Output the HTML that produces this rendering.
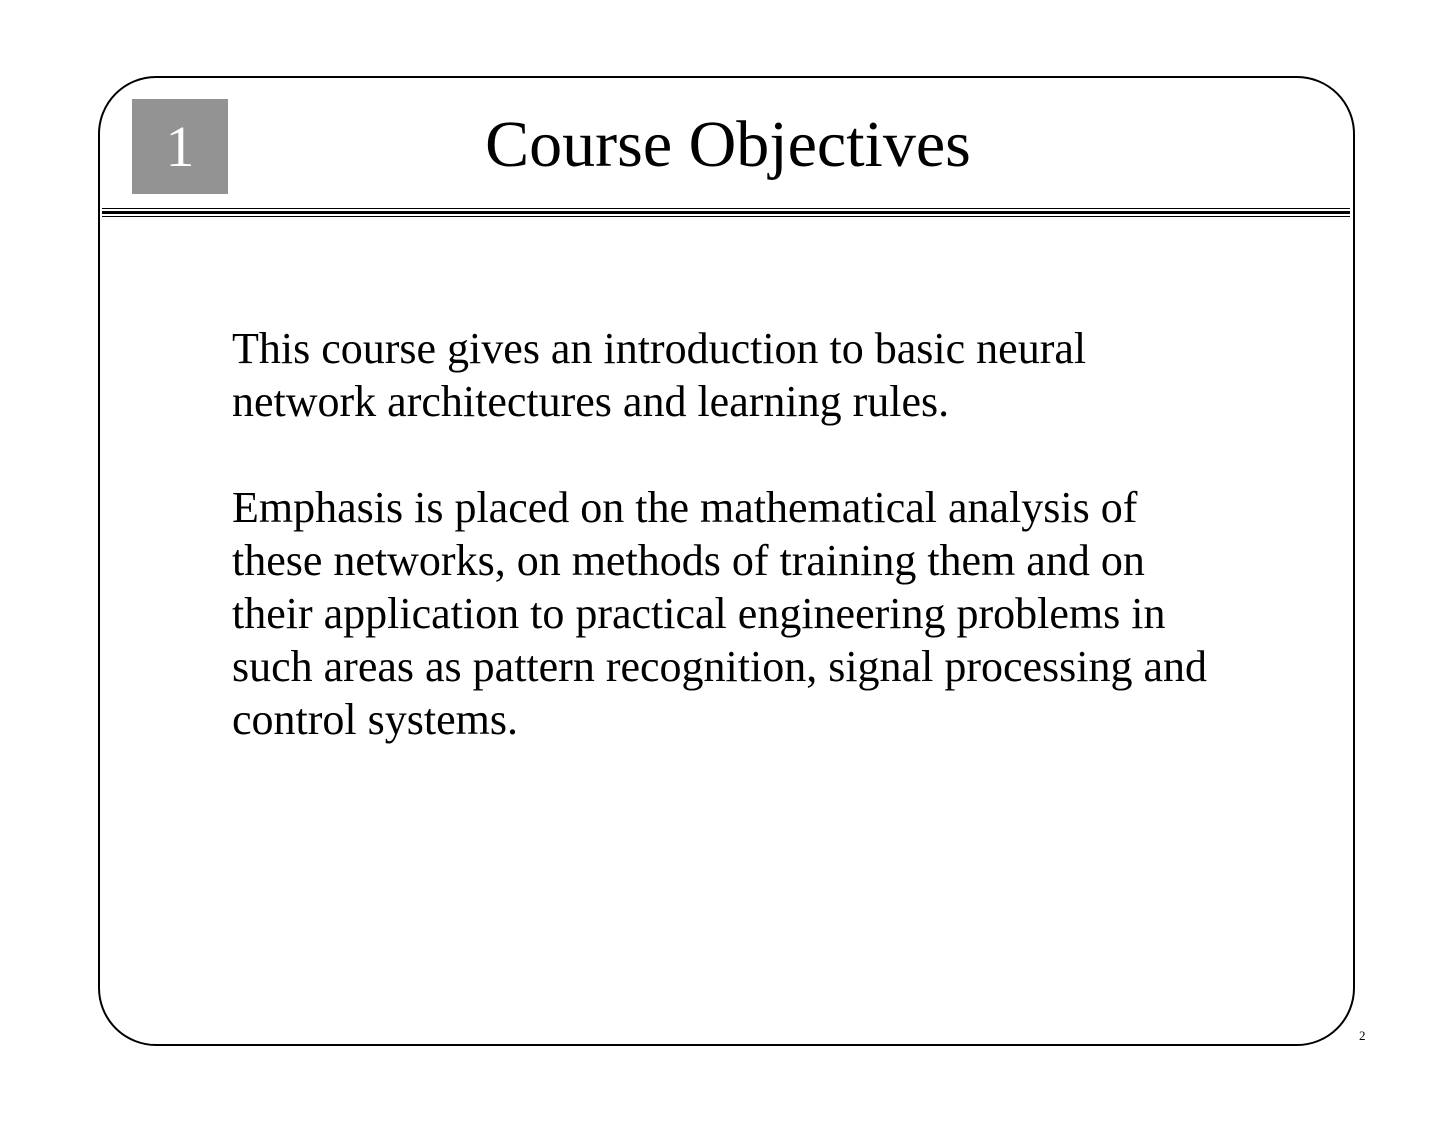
<!DOCTYPE html>
<html><head><style>
html,body{margin:0;padding:0;background:#fff;}
body{width:1456px;height:1125px;position:relative;overflow:hidden;font-family:"Liberation Serif",serif;color:#000;}
.frame{position:absolute;left:98px;top:76px;width:1253px;height:966px;border:2px solid #000;border-radius:58px;}
.num{position:absolute;left:132px;top:99px;width:96px;height:95px;background:#939393;color:#fff;font-size:58px;text-align:center;line-height:95px;}
.title{position:absolute;left:0;width:1456px;text-align:center;top:107px;font-size:66px;line-height:76px;}
.l{position:absolute;left:102px;width:1248px;background:#000;}
.body{position:absolute;left:232px;top:322px;font-size:44px;line-height:53px;white-space:nowrap;}
.pg{position:absolute;left:1359px;top:1028px;font-size:13px;}
</style></head><body>
<div class="frame"></div>
<div class="num">1</div>
<div class="title">Course Objectives</div>
<div class="l" style="top:208px;height:1px"></div>
<div class="l" style="top:211px;height:3px"></div>
<div class="l" style="top:216px;height:1px"></div>
<div class="body">This course gives an introduction to basic neural<br>network architectures and learning rules.<br><br>Emphasis is placed on the mathematical analysis of<br>these networks, on methods of training them and on<br>their application to practical engineering problems in<br>such areas as pattern recognition, signal processing and<br>control systems.</div>
<div class="pg">2</div>
</body></html>
